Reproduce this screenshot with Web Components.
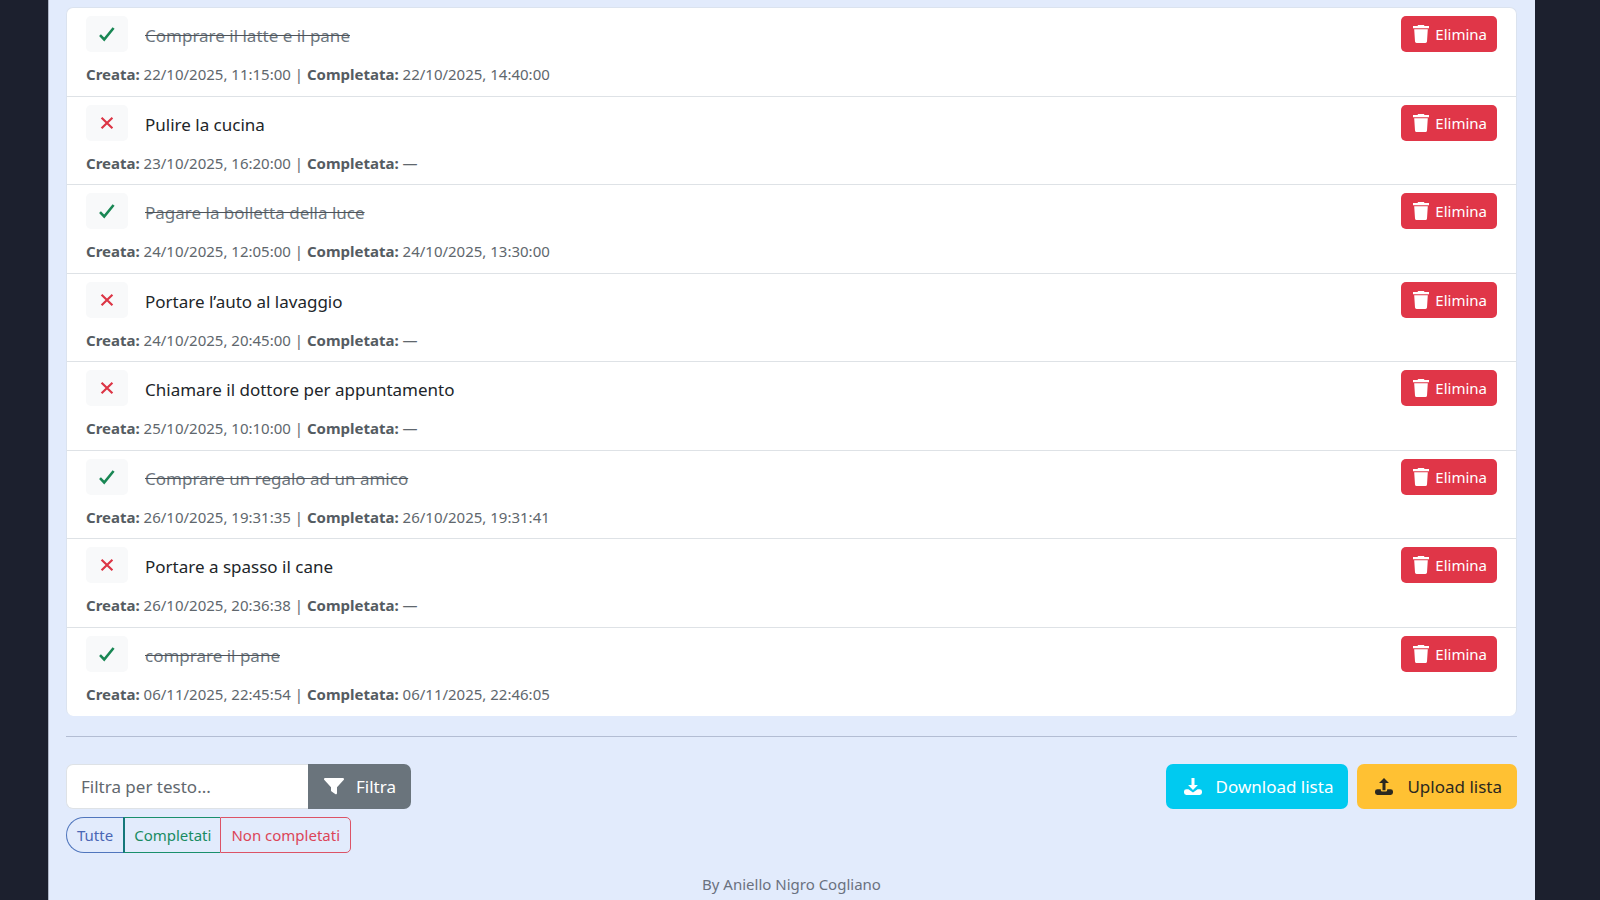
<!DOCTYPE html>
<html lang="it">
<head>
<meta charset="utf-8">
<meta name="viewport" content="width=device-width, initial-scale=1">
<title>Lista attività</title>
<style>
  body {
    margin: 0;
    background: #1c202e;
    color: #212529;
    font: 17px/26px "Noto Sans", "Open Sans", sans-serif;
  }
</style>
</head>
<body>
<todo-page>
  <todo-list>
    <todo-item done created="22/10/2025, 11:15:00" completed="22/10/2025, 14:40:00">Comprare il latte e il pane</todo-item>
    <todo-item created="23/10/2025, 16:20:00">Pulire la cucina</todo-item>
    <todo-item done created="24/10/2025, 12:05:00" completed="24/10/2025, 13:30:00">Pagare la bolletta della luce</todo-item>
    <todo-item created="24/10/2025, 20:45:00">Portare l’auto al lavaggio</todo-item>
    <todo-item created="25/10/2025, 10:10:00">Chiamare il dottore per appuntamento</todo-item>
    <todo-item done created="26/10/2025, 19:31:35" completed="26/10/2025, 19:31:41">Comprare un regalo ad un amico</todo-item>
    <todo-item created="26/10/2025, 20:36:38">Portare a spasso il cane</todo-item>
    <todo-item done created="06/11/2025, 22:45:54" completed="06/11/2025, 22:46:05">comprare il pane</todo-item>
  </todo-list>
  <todo-toolbar slot="tools">
    <text-filter></text-filter>
    <state-filter></state-filter>
    <icon-button slot="actions" icon="download" variant="info">Download lista</icon-button>
    <icon-button slot="actions" icon="upload" variant="warning">Upload lista</icon-button>
  </todo-toolbar>
  <span slot="footer">By Aniello Nigro Cogliano</span>
</todo-page>

<script>
const ICONS = {
  check: '<path fill="none" stroke="currentColor" stroke-width="2.6" d="M1 9.2l4.2 4.3L14.6 2"/>',
  cross: '<path fill="none" stroke="currentColor" stroke-width="2.5" d="M1.8 2l12.4 12M14.2 2L1.8 14"/>',
  trash: '<path fill="currentColor" d="M5.2 0h5.6l.8 1H16v2.2H0V1h4.4zM1.2 4.2h13.6l-.8 12.3a1.6 1.6 0 0 1-1.6 1.5H3.6A1.6 1.6 0 0 1 2 16.5z"/>',
  filter: '<path fill="currentColor" d="M1.2 0h17.6c1 0 1.6 1.2.8 2L13 9.2V15c0 1.2-1 1.6-1.8 1L7.6 13.6c-.4-.3-.6-.6-.6-1.1V9.2L.4 2C-.4 1.2.2 0 1.2 0z"/>',
  download: '<path fill="currentColor" d="M7.5 0h3v7h3.4L9 12 4.1 7h3.4z"/><path fill="currentColor" d="M2.4 11.2h2L9 14.6l4.6-3.4h2a2.4 2.4 0 0 1 2.4 2.4v1a2.4 2.4 0 0 1-2.4 2.4H2.4A2.4 2.4 0 0 1 0 14.6v-1a2.4 2.4 0 0 1 2.4-2.4z"/>',
  upload: '<path fill="currentColor" d="M9 0l5 5h-3.5v7.2h-3V5H4z"/><path fill="currentColor" d="M2.4 11.2h3.4v.8a1.6 1.6 0 0 0 1.6 1.6h3.2a1.6 1.6 0 0 0 1.6-1.6v-.8h3.4a2.4 2.4 0 0 1 2.4 2.4v1a2.4 2.4 0 0 1-2.4 2.4H2.4A2.4 2.4 0 0 1 0 14.6v-1a2.4 2.4 0 0 1 2.4-2.4z"/>'
};
const BOXES = { check: [16, 16], cross: [16, 16], trash: [16, 18], filter: [20, 17], download: [18, 17], upload: [18, 17] };
const svg = (name, w, h) =>
  `<svg viewBox="0 0 ${BOXES[name].join(' ')}" width="${w || BOXES[name][0]}" height="${h || BOXES[name][1]}" aria-hidden="true">${ICONS[name]}</svg>`;

const BASE = `
  *, *::before { box-sizing: border-box; }
  button, input { margin: 0; font: inherit; }
  button { display: inline-flex; align-items: center; justify-content: center; cursor: pointer; }
  svg { display: block; flex: none; }
`;
const render = (el, css, html) => {
  el.attachShadow({ mode: 'open' }).innerHTML = `<style>${BASE}${css}</style>${html}`;
};

customElements.define('todo-page', class extends HTMLElement {
  connectedCallback() {
    render(this, `
      :host {
        display: flex; flex-direction: column; box-sizing: border-box;
        min-height: 100vh; margin: 0 65px 0 48px; padding: 7px 18px 2px 17px;
        border-left: 1px solid #adb5c6; background: #e2ebfc;
      }
      hr { width: 100%; height: 1px; margin: 20px 0 27px; border: 0; background: #b3bdd3; }
      footer { margin-top: 19px; text-align: center; font-size: 15px; line-height: 24px; color: #6a717f; }
    `, `
      <main><slot></slot></main>
      <hr>
      <slot name="tools"></slot>
      <footer><slot name="footer"></slot></footer>
    `);
  }
});

customElements.define('todo-list', class extends HTMLElement {
  connectedCallback() {
    render(this, `
      :host {
        display: grid; grid-auto-rows: 89px 88px; overflow: hidden;
        border: 1px solid #dbe3ef; border-bottom: 0; border-radius: 7px; background: #fff;
      }
    `, `<slot></slot>`);
  }
});

customElements.define('todo-item', class extends HTMLElement {
  connectedCallback() {
    const done = this.hasAttribute('done');
    render(this, `
      :host { display: block; box-sizing: border-box; padding: 8px 19px 0; border-bottom: 1px solid #dee2e6; }
      :host(:last-child) { border-bottom: 0; }
      .row { display: flex; align-items: center; height: 36px; }
      .state {
        width: 42px; height: 36px; margin-right: 17px; padding: 0;
        border: 0; border-radius: 5px; background: #f8f9fa; color: #dc3545;
      }
      :host([done]) .state { color: #198754; }
      .title { flex: 1; padding-top: 3px; }
      :host([done]) .title { color: #6c757d; text-decoration: line-through; text-decoration-color: #4d5359; }
      .delete {
        gap: 6px; height: 36px; padding: 0 10px 0 12px; border: 0; border-radius: 5px;
        background: #e03648; color: #fff; font-size: 15px; line-height: 24px;
      }
      p { margin: 10px 0 0; font-size: 15px; line-height: 24px; color: #60676d; }
      b { color: #555c62; }
    `, `
      <div class="row">
        <button class="state" type="button" aria-label="${done ? 'Completata' : 'Non completata'}">${done ? svg('check', 16, 16) : svg('cross', 14, 14)}</button>
        <span class="title"><slot></slot></span>
        <button class="delete" type="button">${svg('trash')}Elimina</button>
      </div>
      <p><b>Creata:</b> ${this.getAttribute('created')} | <b>Completata:</b> ${this.getAttribute('completed') || '—'}</p>
    `);
  }
});

customElements.define('todo-toolbar', class extends HTMLElement {
  connectedCallback() {
    render(this, `
      :host { display: flex; justify-content: space-between; align-items: flex-start; }
      .filters { display: flex; flex-direction: column; align-items: flex-start; gap: 8px; }
      .actions { display: flex; gap: 9px; }
    `, `
      <div class="filters"><slot></slot></div>
      <div class="actions"><slot name="actions"></slot></div>
    `);
  }
});

customElements.define('text-filter', class extends HTMLElement {
  connectedCallback() {
    render(this, `
      :host { display: block; }
      form { display: flex; }
      input {
        width: 242px; height: 45px; padding: 0 14px; color: #212529; background: #fff;
        border: 1px solid #dee2e6; border-right: 0; border-radius: 7px 0 0 7px; outline: 0;
      }
      input::placeholder { color: #62686e; opacity: 1; }
      icon-button { --radius: 0 7px 7px 0; }
    `, `
      <form onsubmit="return false">
        <input type="text" placeholder="Filtra per testo..." aria-label="Filtra per testo">
        <icon-button icon="filter" variant="secondary">Filtra</icon-button>
      </form>
    `);
  }
});

customElements.define('state-filter', class extends HTMLElement {
  connectedCallback() {
    render(this, `
      :host { display: flex; }
      button {
        height: 36px; padding: 0 10px; border: 1px solid; background: transparent;
        font-size: 15px; line-height: 24px;
      }
      .all { border-color: #5076bd; border-radius: 18px 0 0 18px; border-right: 0; color: #4a67b5; }
      .done { padding: 0 9px; border-color: #198f6c; border-left: 2px solid #14777a; border-right: 0; color: #198b62; }
      .open { border-color: #dc5366; border-radius: 0 5px 5px 0; color: #dc4558; }
    `, `
      <button class="all" type="button">Tutte</button>
      <button class="done" type="button">Completati</button>
      <button class="open" type="button">Non completati</button>
    `);
  }
});

customElements.define('icon-button', class extends HTMLElement {
  connectedCallback() {
    render(this, `
      :host { display: block; }
      button { gap: 14px; height: 45px; padding: 0 15px 0 18px; border: 0; border-radius: var(--radius, 7px); }
      :host([variant="secondary"]) button { gap: 12px; background: #6a747c; color: #fff; padding-left: 16px; }
      :host([variant="info"]) button { background: #00caf0; color: #fff; }
      :host([variant="warning"]) button { background: #ffc133; color: #2b2820; }
    `, `<button type="button">${svg(this.getAttribute('icon'))}<slot></slot></button>`);
  }
});
</script>
</body>
</html>
